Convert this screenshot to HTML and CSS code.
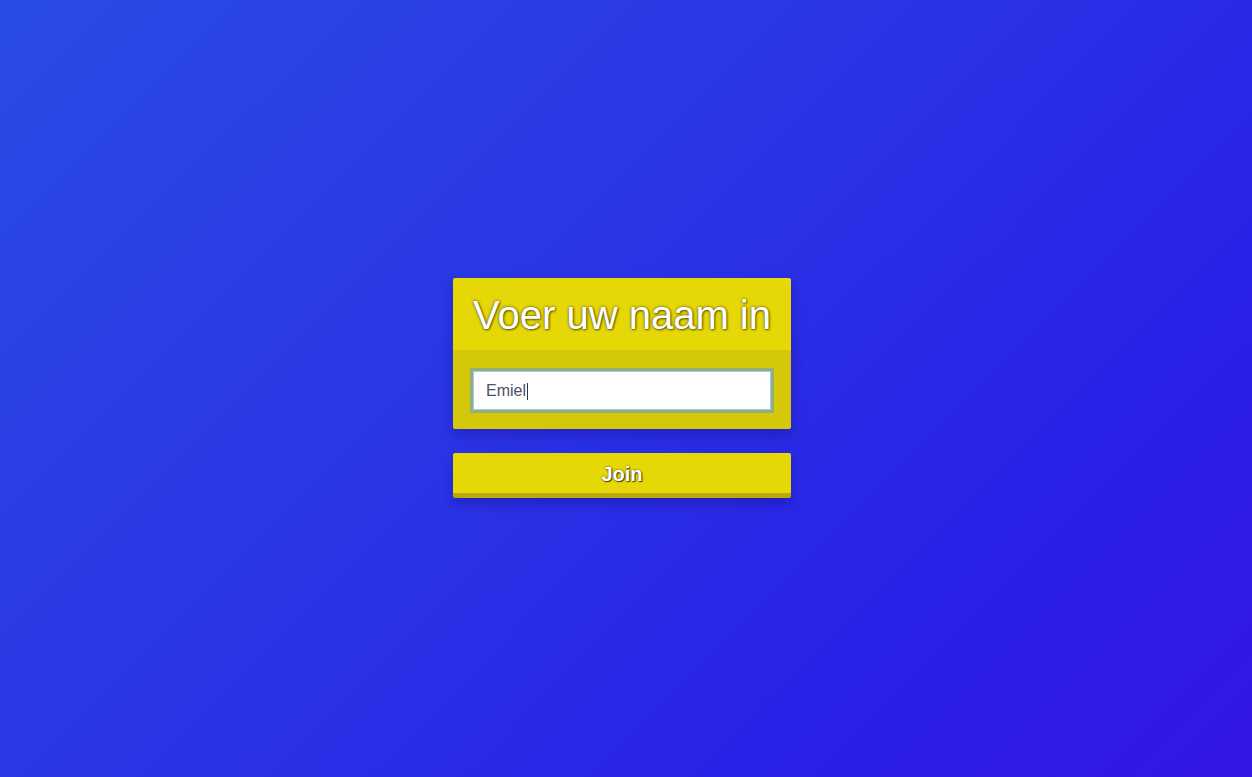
FILE: index.html
```html
<!DOCTYPE html>
<html lang="nl">
<head>
<meta charset="utf-8">
<title>Join</title>
<link rel="stylesheet" href="styles.css">
</head>
<body>
<main class="page">
  <div class="stack">
    <section class="card">
      <header class="card-head">Voer uw naam in</header>
      <div class="card-body">
        <div class="field"><span class="field-text">Emiel</span><span class="caret"></span></div>
      </div>
    </section>
    <button class="join">Join</button>
  </div>
</main>
</body>
</html>
```
FILE: styles.css
```css
html, body {
  margin: 0;
  height: 100%;
}
body {
  background: linear-gradient(135deg, #2a4be4 0%, #2a34e6 45%, #2a1ee6 80%, #3416e4 100%);
  font-family: "Liberation Sans", Arial, sans-serif;
}
.page {
  height: 100%;
  display: flex;
  align-items: center;
  justify-content: center;
  padding-right: 8px;
  padding-bottom: 2px;
  box-sizing: border-box;
}
.stack {
  width: 338px;
  display: flex;
  flex-direction: column;
  gap: 24px;
}
.card {
  box-shadow: 0 6px 14px rgba(20, 10, 120, 0.35);
  border-radius: 2px;
  overflow: hidden;
}
.card-head {
  background: #e6d806;
  height: 72px;
  display: flex;
  align-items: center;
  justify-content: center;
  color: #fff;
  font-size: 40px;
  text-shadow: 0 0 3px rgba(70, 60, 0, 0.9), 1px 1px 2px rgba(60, 50, 0, 0.6);
  padding-top: 4px;
  box-sizing: border-box;
}
.card-body {
  background: #d5c70a;
  padding: 18px 17px 16px;
  height: 79px;
  box-sizing: border-box;
}
.field {
  height: 45px;
  box-sizing: border-box;
  border: 3px solid #96ae78;
  background: #fff;
  box-shadow: inset 0 0 0 1px #9ccaf2;
  display: flex;
  align-items: center;
  padding-left: 13px;
  padding-top: 2px;
  color: #4b5068;
  font-size: 16px;
}
.caret {
  width: 1px;
  height: 17px;
  background: #333;
  margin-left: 1px;
}
.join {
  height: 45px;
  border: none;
  border-bottom: 5px solid #bca908;
  background: #e6d806;
  color: #fff;
  font-family: "Liberation Sans", Arial, sans-serif;
  font-weight: bold;
  font-size: 20px;
  text-shadow: 0 0 2px rgba(60, 50, 0, 0.9), 1px 1px 1px rgba(40, 30, 0, 0.8);
  box-shadow: 0 6px 12px rgba(20, 10, 120, 0.35);
  padding: 3px 0 0;
  border-radius: 2px;
  cursor: pointer;
}
```
